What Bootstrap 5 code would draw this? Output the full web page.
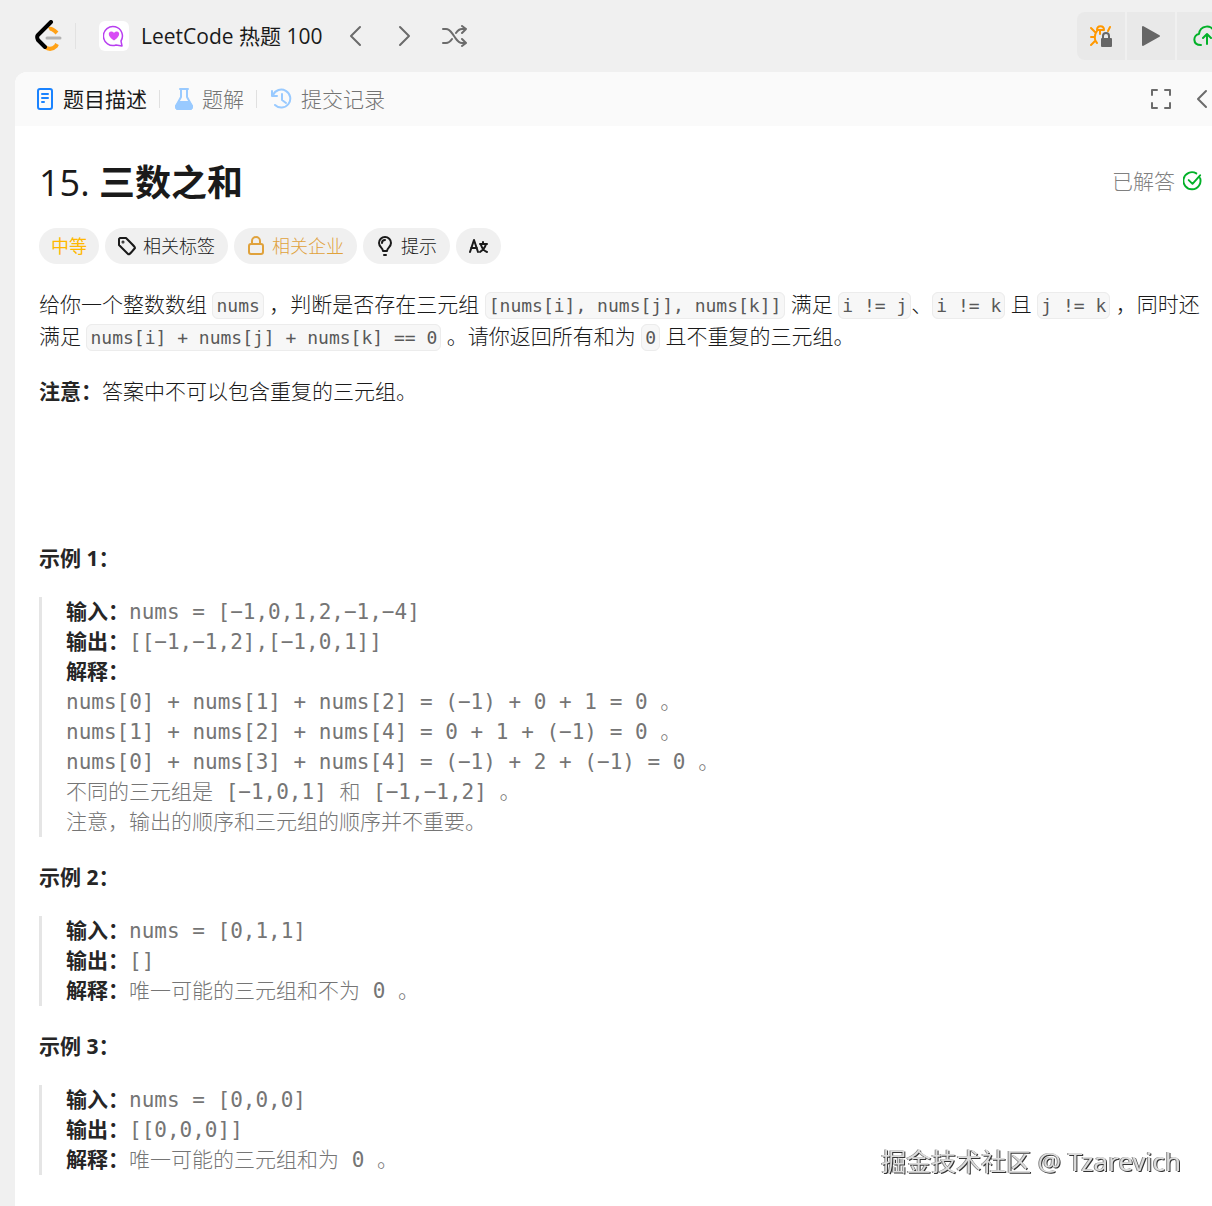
<!DOCTYPE html>
<html lang="zh-CN">
<head>
<meta charset="utf-8">
<meta name="viewport" content="width=device-width, initial-scale=1">
<title>15. 三数之和 - LeetCode</title>
<link href="https://cdn.jsdelivr.net/npm/bootstrap@5.3.0/dist/css/bootstrap.min.css" rel="stylesheet">
<style>
body{background:#f0f0f0;color:#262626;font-family:"Noto Sans","Noto Sans CJK SC",sans-serif;font-size:21px;line-height:32px;overflow-x:hidden}
svg{display:block;flex:none;fill:none;stroke:currentColor;stroke-width:2;stroke-linecap:round;stroke-linejoin:round}
a{color:inherit;text-decoration:none}
.topbar{height:72px;padding-left:35px}
.logo-mark{stroke-width:4}
.brand-rule{width:1px;height:26px;background:#e2e2e2;margin:0 23px 0 12px}
.study-icon{width:30px;height:30px;border-radius:6px;background:#fff}
.study-name{color:#1a1a1a;margin-left:12px;font-family:"Open Sans","Noto Sans CJK SC",sans-serif}
.plain-btn{border:0;background:none;padding:0;color:#6b6b6b}
.pager{gap:26px;margin-left:20px}
.run-group{gap:2px;height:48px;border-radius:8px 0 0 8px;overflow:hidden}
.run-group button{border:0;padding:0;width:48px;background:#e9e9e9}
.run-group .submit-btn{width:35px;padding-left:16px;overflow:hidden}
.green{color:#02b128}
.panel{background:#fff;border-radius:12px 0 0 0;margin-left:15px;min-height:calc(100vh - 72px)}
.tabs{height:54px;background:#fafafa;border-radius:12px 0 0 0;padding-left:20px;overflow:hidden;color:#737373;font-weight:300}
.tabs a{gap:8px}
.tabs .current{color:#1a1a1a;font-weight:400}
.doc-ico{color:#1a83ff}
.soft-ico{color:#99caff}
.tab-rule{width:1px;height:18px;background:#e0e0e0;margin:0 14px 0 12px}
.problem{padding:34px 10px 24px 24px}
.problem h1{font-size:36px;line-height:46px;color:#1a1a1a;font-weight:700;font-family:"Open Sans","Noto Sans CJK SC",sans-serif}
.problem h1 span{font-weight:400}
.solved{color:#808080;font-weight:300;padding-bottom:4px}
.chips{gap:6px;margin-top:22px;margin-bottom:24px}
.chip{border:0;height:36px;border-radius:18px;background:#f0f0f0;color:#1a1a1a;font-size:18px;padding:0 12px;gap:6px;font-weight:300;line-height:36px}
button.chip{padding-right:13px}
.chip.medium{color:#ffb800;font-weight:400}
.chip.company{color:#e0a23c}
.statement{font-weight:300;color:#1a1a1a}
.statement p{margin:0 0 23px}
.statement p.spacer{margin-bottom:24px}
.statement strong{font-weight:700;color:#262626}
.statement code{font:18px/26px "DejaVu Sans Mono",monospace;color:#595959;background:#f7f7f7;border:1px solid #ececec;border-radius:6px;padding:2px 3px}
.statement pre{font:300 21px/30px "DejaVu Sans Mono","Noto Sans CJK SC",monospace;color:#757575;border-left:3px solid #e5e5e5;padding-left:24px;margin:0 0 24px;white-space:pre-wrap;overflow:visible}
.statement pre strong{font-family:"Noto Sans CJK SC",sans-serif;line-height:20px}
.watermark{right:31px;bottom:29px;font-size:25px;font-weight:400;color:#dcdcdc;text-shadow:1px 1px 0 #333,-1px 0 0 #888}
.watermark span{font-size:26px}
</style>
<script src="https://cdn.jsdelivr.net/npm/bootstrap@5.3.0/dist/js/bootstrap.bundle.min.js"></script>
</head>
<body>
<header class="topbar d-flex align-items-center">
  <a href="#" aria-label="LeetCode"><svg class="logo-mark" width="28" height="32" viewBox="0 0 28 32"><path d="M14 9c2-1 4 0 8 4M10 27c4 3 8 2 11-1l1-2" stroke="#ffa116" stroke-linecap="butt"/><path d="M12 18h13" stroke="#b3b3b3" style="stroke-width:3"/><path d="M16 2L3 15c-1 1-1 3 0 5l7 7" stroke="#000"/></svg></a>
  <div class="brand-rule"></div>
  <div class="study-icon d-flex align-items-center justify-content-center"><svg width="22" height="22" viewBox="0 0 22 22"><path d="M18 16a9.500 9.500 0 1 0-5 4l6 1z" stroke="#b83ff0" style="stroke-width:1.500"/><path d="M11 15.500C3 10 6 6 8.500 6.500c1.500 0 2 1 2.500 1.500.500-.500 1-1.500 2.500-1.500C16 6 19 10 11 15.500z" fill="#d84cf5" stroke="none"/></svg></div>
  <a href="#" class="study-name text-nowrap">LeetCode 热题 100</a>
  <div class="pager d-flex align-items-center">
    <button class="plain-btn" aria-label="上一题"><svg width="24" height="22" viewBox="0 0 24 22"><path d="M18 2L9 11l9 9"/></svg></button>
    <button class="plain-btn" aria-label="下一题"><svg width="24" height="22" viewBox="0 0 24 22"><path d="M8 2l9 9-9 9"/></svg></button>
    <button class="plain-btn" aria-label="随机"><svg width="26" height="22" viewBox="0 0 26 22"><path d="M1 4h3c4 0 5 3 8 7s4 7 8 7h4M1 18h3c3 0 4-1 6-4M14 8c2-3 3-4 6-4h4M20 1l4 3-4 4M20 14l4 4-4 3"/></svg></button>
  </div>
  <div class="run-group d-flex ms-auto">
    <button class="d-flex align-items-center justify-content-center" aria-label="调试"><svg width="24" height="24" viewBox="0 0 24 24"><path d="M8 6c0-5 7-5 7 0zM11 7v3M8 7c-3 4-3 9 0 12M2 4l4 4M21 3l-2 4M2 13h4M2 21l4-4" stroke="#ff9800"/><path d="M14 15v-3a3 3 0 0 1 6 0v3" stroke="#666"/><rect x="12" y="14" width="11" height="9" rx="1" fill="#666" stroke="none"/></svg></button>
    <button class="d-flex align-items-center justify-content-center" aria-label="运行"><svg width="20" height="22" viewBox="0 0 20 22"><path d="M2 2v18l16-9z" fill="#666" stroke="#666"/></svg></button>
    <button class="submit-btn green d-flex align-items-center" aria-label="提交"><svg width="28" height="24" viewBox="0 0 28 24"><path d="M8 21C-1 21 0 11 6 10 7 1 19 0 21 8c6 1 7 12-1 13M14 20V10M10 14l4-4 4 4"/></svg></button>
  </div>
</header>
<main class="panel">
  <nav class="tabs d-flex align-items-center">
    <a href="#" class="current d-flex align-items-center text-nowrap"><svg class="doc-ico" width="20" height="22" viewBox="0 0 20 22"><rect x="3" y="1" width="14" height="20" rx="2"/><path d="M7 6h6M7 10h6M7 14h2"/></svg>题目描述</a>
    <div class="tab-rule"></div>
    <a href="#" class="d-flex align-items-center text-nowrap"><svg class="soft-ico" width="20" height="22" viewBox="0 0 20 22"><path d="M6 1h8M7 1v8L2 18c0 2 1 3 2 3h12c1 0 2-1 2-3L13 9V1"/><path d="M5 14h10l3 4c0 2-1 3-2 3H4c-1 0-2-1-2-3z" fill="currentColor"/></svg>题解</a>
    <div class="tab-rule"></div>
    <a href="#" class="d-flex align-items-center text-nowrap"><svg class="soft-ico" width="22" height="22" viewBox="0 0 22 22"><path d="M1 3v5h5M2 7a9 9 0 1 1 2 10M11 6v6l4 3"/></svg>提交记录</a>
    <button class="plain-btn ms-auto" aria-label="全屏"><svg width="20" height="20" viewBox="0 0 20 20"><path d="M1 6V1h5M14 1h5v5M19 14v5h-5M6 19H1v-5"/></svg></button>
    <button class="plain-btn ms-4" aria-label="收起"><svg width="17" height="20" viewBox="0 0 17 20"><path d="M11 2L3 10l8 8"/></svg></button>
  </nav>
  <article class="problem">
    <div class="d-flex align-items-center justify-content-between">
      <h1 class="m-0"><span>15.</span> 三数之和</h1>
      <div class="solved d-flex align-items-center gap-2">已解答<svg class="green" width="19" height="20" viewBox="0 0 20 20"><path d="M18 7a9 9 0 1 1-4-5M6 9l4 4 8-9"/></svg></div>
    </div>
    <div class="chips d-flex flex-wrap">
      <span class="chip medium">中等</span>
      <button class="chip d-flex align-items-center"><svg width="20" height="20" viewBox="0 0 20 20"><path d="M2 3v6l9 9c1 1 2 0 7-6 0-1 0-1-9-10H3z"/><circle cx="6" cy="6" r=".500"/></svg>相关标签</button>
      <button class="chip company d-flex align-items-center"><svg width="20" height="20" viewBox="0 0 20 20"><rect x="3" y="8" width="14" height="10" rx="2"/><path d="M6 8V5a4 4 0 0 1 8 0v3"/></svg>相关企业</button>
      <button class="chip d-flex align-items-center"><svg width="20" height="22" viewBox="0 0 20 22"><path d="M8 16c0-3-4-4-4-8a6 6 0 0 1 12 0c0 4-4 5-4 8zM9 20h2M7 8c0-2 1-3 3-3"/></svg>提示</button>
      <button class="chip d-flex align-items-center" aria-label="切换语言"><svg width="20" height="18" viewBox="0 0 20 18"><path d="M2 15L6 3l4 12M3 11h6M12 7h7M15 5v2M18 7c-1 4-3 6-6 8M13 8c1 3 3 6 6 7"/></svg></button>
    </div>
    <div class="statement">
      <p>给你一个整数数组 <code>nums</code> ，判断是否存在三元组 <code>[nums[i], nums[j], nums[k]]</code> 满足 <code>i != j</code>、<code>i != k</code> 且 <code>j != k</code> ，同时还满足 <code>nums[i] + nums[j] + nums[k] == 0</code> 。请你返回所有和为 <code>0</code> 且不重复的三元组。</p>
      <p><strong>注意：</strong>答案中不可以包含重复的三元组。</p>
      <p class="spacer">&nbsp;</p>
      <p class="spacer">&nbsp;</p>
      <p><strong>示例 1：</strong></p>
<pre><strong>输入：</strong>nums = [−1,0,1,2,−1,−4]
<strong>输出：</strong>[[−1,−1,2],[−1,0,1]]
<strong>解释：</strong>
nums[0] + nums[1] + nums[2] = (−1) + 0 + 1 = 0 。
nums[1] + nums[2] + nums[4] = 0 + 1 + (−1) = 0 。
nums[0] + nums[3] + nums[4] = (−1) + 2 + (−1) = 0 。
不同的三元组是 [−1,0,1] 和 [−1,−1,2] 。
注意，输出的顺序和三元组的顺序并不重要。</pre>
      <p><strong>示例 2：</strong></p>
<pre><strong>输入：</strong>nums = [0,1,1]
<strong>输出：</strong>[]
<strong>解释：</strong>唯一可能的三元组和不为 0 。</pre>
      <p><strong>示例 3：</strong></p>
<pre class="mb-0"><strong>输入：</strong>nums = [0,0,0]
<strong>输出：</strong>[[0,0,0]]
<strong>解释：</strong>唯一可能的三元组和为 0 。</pre>
    </div>
  </article>
</main>
<div class="watermark position-fixed">掘金技术社区 <span>@ Tzarevich</span></div>
</body>
</html>
